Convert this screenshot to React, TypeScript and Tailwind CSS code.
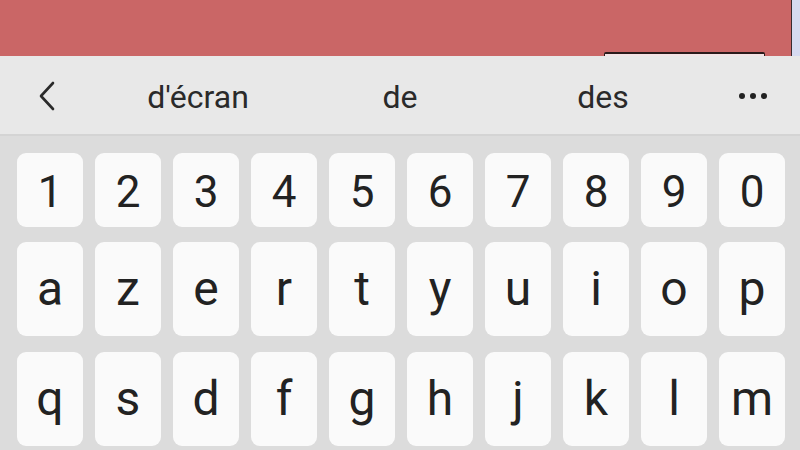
const digits = ["1", "2", "3", "4", "5", "6", "7", "8", "9", "0"];
const row2 = ["a", "z", "e", "r", "t", "y", "u", "i", "o", "p"];
const row3 = ["q", "s", "d", "f", "g", "h", "j", "k", "l", "m"];

function Key({ label, tall }: { label: string; tall?: boolean }) {
  return (
    <div
      className={`flex w-[66px] shrink-0 items-center justify-center rounded-[9px] bg-[#fafafa] text-[#222222] ${
        tall ? "h-[94px] text-[48px]" : "h-[74px] pt-[4px] text-[44px]"
      }`}
    >
      {label}
    </div>
  );
}

export default function App() {
  return (
    <div className="h-[450px] w-[800px] overflow-hidden bg-[#dcdcdc] font-['Roboto',sans-serif]">
      {/* app content behind the keyboard */}
      <div className="flex h-[56px] bg-[#ca6666]">
        <div className="flex-1" />
        <div className="mt-[52px] h-[4px] w-[161px] rounded-t-[2px] border-x border-t-2 border-[#2a1a1a] bg-[#f3e4e6]" />
        <div className="w-[26px]" />
        <div className="w-[1px] bg-[#3a2a30]" />
        <div className="w-[8px] bg-[#d6daf0]" />
      </div>

      {/* suggestion strip */}
      <div className="flex h-[80px] items-center border-b-2 border-[#d4d4d4] bg-[#e8e8e8] text-[32px] text-[#2a2a2a]">
        <div className="flex w-[96px] justify-center">
          <svg width="20" height="30" viewBox="0 0 20 30" className="ml-[-2px] mt-[2px]">
            <path d="M16 2 L4 15 L16 28" fill="none" stroke="#2a2a2a" strokeWidth="2.6" strokeLinecap="round" strokeLinejoin="round" />
          </svg>
        </div>
        <span className="w-[204px] pt-[3px] text-center">d'écran</span>
        <span className="w-[200px] pt-[3px] text-center">de</span>
        <span className="w-[206px] pt-[3px] text-center">des</span>
        <div className="flex flex-1 items-center justify-center gap-[5px] pt-[2px]">
          <span className="h-[6px] w-[6px] rounded-full bg-[#222222]" />
          <span className="h-[6px] w-[6px] rounded-full bg-[#222222]" />
          <span className="h-[6px] w-[6px] rounded-full bg-[#222222]" />
        </div>
      </div>

      {/* keys */}
      <div className="flex flex-col gap-[15px] pl-[17px] pt-[17px]">
        <div className="flex gap-[12px]">
          {digits.map((k) => (
            <Key key={k} label={k} />
          ))}
        </div>
        <div className="flex gap-[12px]">
          {row2.map((k) => (
            <Key key={k} label={k} tall />
          ))}
        </div>
        <div className="mt-[1px] flex gap-[12px]">
          {row3.map((k) => (
            <Key key={k} label={k} tall />
          ))}
        </div>
      </div>
    </div>
  );
}
